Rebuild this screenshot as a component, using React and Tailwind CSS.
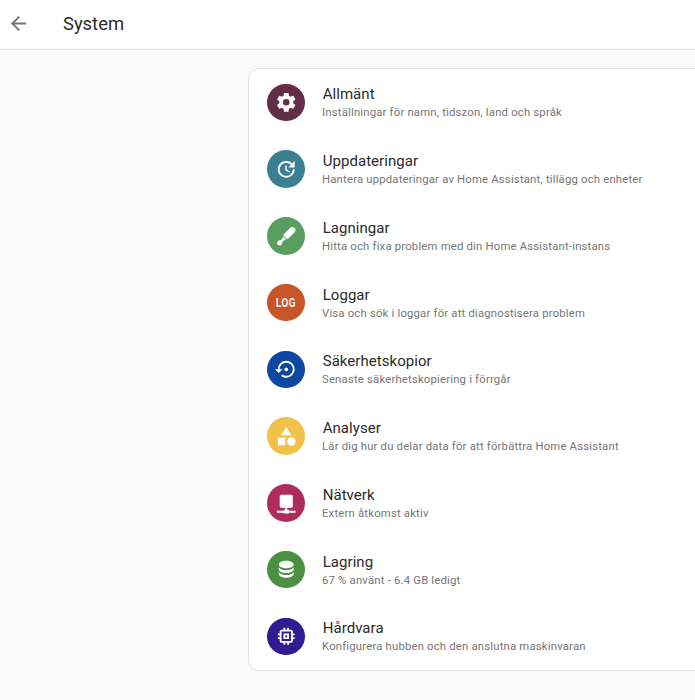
const rows = [
  {
    title: "Allmänt",
    sub: "Inställningar för namn, tidszon, land och språk",
    color: "bg-[#632c47]",
    path: "M12,15.5A3.5,3.5 0 0,1 8.5,12A3.5,3.5 0 0,1 12,8.5A3.5,3.5 0 0,1 15.5,12A3.5,3.5 0 0,1 12,15.5M19.43,12.97C19.47,12.65 19.5,12.33 19.5,12C19.5,11.67 19.47,11.34 19.43,11L21.54,9.37C21.73,9.22 21.78,8.95 21.66,8.73L19.66,5.27C19.54,5.05 19.27,4.96 19.05,5.05L16.56,6.05C16.04,5.66 15.5,5.32 14.87,5.07L14.5,2.42C14.46,2.18 14.25,2 14,2H10C9.75,2 9.54,2.18 9.5,2.42L9.13,5.07C8.5,5.32 7.96,5.66 7.44,6.05L4.95,5.05C4.73,4.96 4.46,5.05 4.34,5.27L2.34,8.73C2.21,8.95 2.27,9.22 2.46,9.37L4.57,11C4.53,11.34 4.5,11.67 4.5,12C4.5,12.33 4.53,12.65 4.57,12.97L2.46,14.63C2.27,14.78 2.21,15.05 2.34,15.27L4.34,18.73C4.46,18.95 4.73,19.03 4.95,18.95L7.44,17.94C7.96,18.34 8.5,18.68 9.13,18.93L9.5,21.58C9.54,21.82 9.75,22 10,22H14C14.25,22 14.46,21.82 14.5,21.58L14.87,18.93C15.5,18.67 16.04,18.34 16.56,17.94L19.05,18.95C19.27,19.03 19.54,18.95 19.66,18.73L21.66,15.27C21.78,15.05 21.73,14.78 21.54,14.63L19.43,12.97Z",
  },
  {
    title: "Uppdateringar",
    sub: "Hantera uppdateringar av Home Assistant, tillägg och enheter",
    color: "bg-[#3a7f92]",
    path: "M21,10.12H14.22L16.96,7.3C14.23,4.6 9.81,4.5 7.08,7.2C4.35,9.91 4.35,14.28 7.08,17C9.81,19.7 14.23,19.7 16.96,17C18.32,15.65 19,14.08 19,12.1H21C21,14.08 20.12,16.65 18.36,18.39C14.85,21.87 9.15,21.87 5.64,18.39C2.14,14.92 2.11,9.28 5.62,5.81C9.13,2.34 14.76,2.34 18.27,5.81L21,3V10.12M12.5,8V12.25L16,14.33L15.28,15.54L11,13V8H12.5Z",
  },
  {
    title: "Lagningar",
    sub: "Hitta och fixa problem med din Home Assistant-instans",
    color: "bg-[#5a9e5f]",
    path: "M21,3C19.7,1.7 17.6,1.7 16.3,3L9.6,9.7C9,10.3 9,11.3 9.6,11.9L12.1,14.4C12.7,15 13.7,15 14.3,14.4L21,7.7C22.3,6.4 22.3,4.3 21,3ZM19.3,4.7C18.9,4.3 18.3,4.3 17.9,4.7L12.2,10.4L13.6,11.8L19.3,6.1C19.7,5.7 19.7,5.1 19.3,4.7ZM8.6,12.1L11.9,15.4L10.2,15.9L7.6,18.1C7.9,19.1 7.6,20.2 6.8,21C5.7,22.1 3.9,22.1 2.9,21.1C1.9,20.1 1.9,18.3 3,17.2C3.8,16.4 4.9,16.1 5.9,16.4L8.1,13.8L8.6,12.1Z",
  },
  {
    title: "Loggar",
    sub: "Visa och sök i loggar för att diagnostisera problem",
    color: "bg-[#c8552a]",
    log: true,
  },
  {
    title: "Säkerhetskopior",
    sub: "Senaste säkerhetskopiering i förrgår",
    color: "bg-[#0d47a1]",
    path: "M12,3A9,9 0 0,0 3,12H0L4,16L8,12H5A7,7 0 0,1 12,5A7,7 0 0,1 19,12A7,7 0 0,1 12,19C10.5,19 9.09,18.5 7.94,17.7L6.5,19.14C8.04,20.3 9.94,21 12,21A9,9 0 0,0 21,12A9,9 0 0,0 12,3M14,12A2,2 0 0,0 12,10A2,2 0 0,0 10,12A2,2 0 0,0 12,14A2,2 0 0,0 14,12Z",
  },
  {
    title: "Analyser",
    sub: "Lär dig hur du delar data för att förbättra Home Assistant",
    color: "bg-[#f2c14a]",
    path: "M11,13.5V21.5H3V13.5H11M12,2L17.5,11H6.5L12,2M17.5,13C20,13 22,15 22,17.5C22,20 20,22 17.5,22C15,22 13,20 13,17.5C13,15 15,13 17.5,13Z",
  },
  {
    title: "Nätverk",
    sub: "Extern åtkomst aktiv",
    color: "bg-[#b02c5c]",
    path: "M17,3A2,2 0 0,1 19,5V15A2,2 0 0,1 17,17H13V19H14A1,1 0 0,1 15,20H22V22H15A1,1 0 0,1 14,23H10A1,1 0 0,1 9,22H2V20H9A1,1 0 0,1 10,19H11V17H7C5.89,17 5,16.1 5,15V5A2,2 0 0,1 7,3H17Z",
  },
  {
    title: "Lagring",
    sub: "67 % använt - 6.4 GB ledigt",
    color: "bg-[#4b8f42]",
    path: "M12,3C7.58,3 4,4.79 4,7C4,9.21 7.58,11 12,11C16.42,11 20,9.21 20,7C20,4.79 16.42,3 12,3M4,9V12C4,14.21 7.58,16 12,16C16.42,16 20,14.21 20,12V9C20,11.21 16.42,13 12,13C7.58,13 4,11.21 4,9M4,14V17C4,19.21 7.58,21 12,21C16.42,21 20,19.21 20,17V14C20,16.21 16.42,18 12,18C7.58,18 4,16.21 4,14Z",
  },
  {
    title: "Hårdvara",
    sub: "Konfigurera hubben och den anslutna maskinvaran",
    color: "bg-[#311b92]",
    path: "M17,17H7V7H17M21,11V9H19V7C19,5.89 18.1,5 17,5H15V3H13V5H11V3H9V5H7C5.89,5 5,5.89 5,7V9H3V11H5V13H3V15H5V17A2,2 0 0,0 7,19H9V21H11V19H13V21H15V19H17A2,2 0 0,0 19,17V15H21V13H19V11M13,13H11V11H13M15,9H9V15H15V9Z",
  },
];

export default function App() {
  return (
    <div className="h-[700px] w-[695px] overflow-hidden bg-[#fafafa] font-['Roboto',sans-serif]">
      <header className="flex h-[50px] items-center border-b border-[#e0e0e0] bg-white">
        <svg viewBox="0 0 24 24" className="ml-[7px] mb-[2px] h-[23px] w-[23px] fill-[#757575]">
          <path d="M20,11V13H8L13.5,18.5L12.08,19.92L4.16,12L12.08,4.08L13.5,5.5L8,11H20Z" />
        </svg>
        <h1 className="ml-[33px] mb-[2px] text-[18.4px] text-[#2b2b2b]">System</h1>
      </header>

      <div className="ml-[248px] mt-[18px] w-[800px] rounded-[11px] border border-[#e0e0e0] bg-white">
        {rows.map((row) => (
          <div key={row.title} className="flex h-[66.75px] items-center gap-[17.5px] pl-[18px]">
            <div className={`flex h-[37.5px] w-[37.5px] shrink-0 items-center justify-center rounded-full ${row.color}`}>
              {row.log ? (
                <span className="scale-x-[0.72] font-['Liberation_Sans',sans-serif] text-[12px] font-bold tracking-[0.6px] text-white">LOG</span>
              ) : (
                <svg viewBox="0 0 24 24" className="h-[22.5px] w-[22.5px] fill-white">
                  <path d={row.path} />
                </svg>
              )}
            </div>
            <div className="pt-[3px]">
              <div className="pl-[0.7px] text-[15px] leading-[19px] tracking-[0.05px] text-[#2b2b2b]">{row.title}</div>
              <div className="text-[11.3px] leading-[18px] tracking-[0.2px] text-[#757575]">{row.sub}</div>
            </div>
          </div>
        ))}
      </div>
    </div>
  );
}
